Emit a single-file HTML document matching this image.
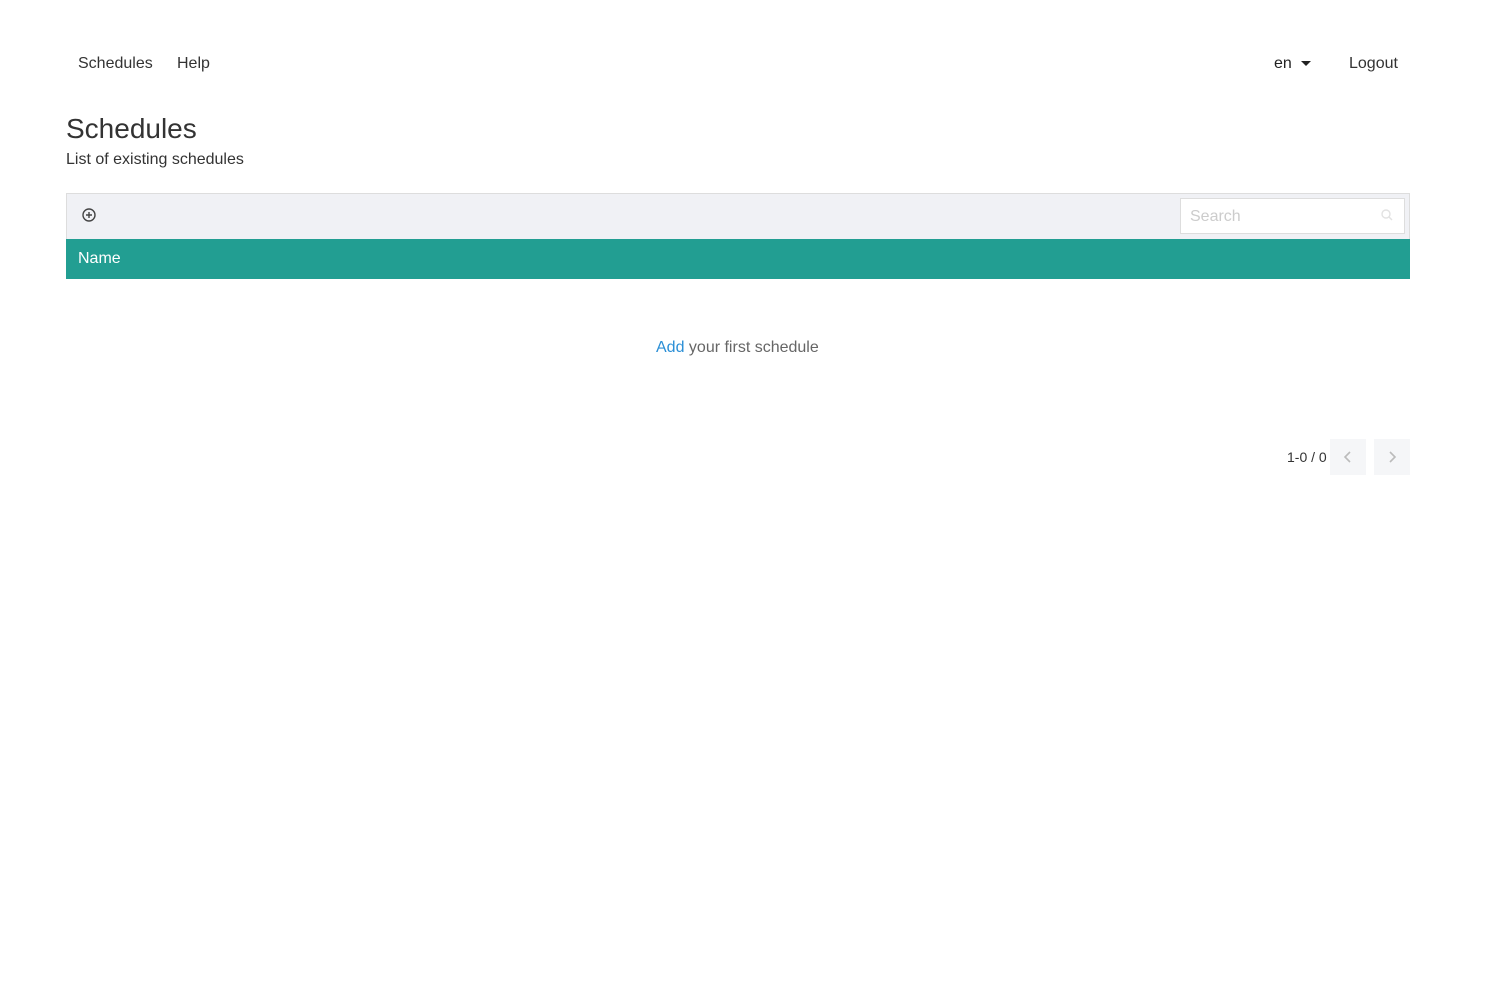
<!DOCTYPE html>
<html><head><meta charset="utf-8"><style>
body{margin:0;background:#fff;font-family:"Liberation Sans",sans-serif;color:#333;width:1506px;height:982px;position:relative;overflow:hidden}
.a{position:absolute;white-space:nowrap}
</style></head><body>
<div class="a" style="left:78px;top:55px;font-size:16px;color:#333">Schedules</div>
<div class="a" style="left:177px;top:55px;font-size:16px;color:#333">Help</div>
<div class="a" style="left:1274px;top:55px;font-size:16px;color:#222">en</div>
<div class="a" style="left:1301px;top:61px;width:0;height:0;border-left:5px solid transparent;border-right:5px solid transparent;border-top:5px solid #222"></div>
<div class="a" style="left:1349px;top:55px;font-size:16px;color:#333">Logout</div>
<div class="a" style="left:66px;top:113px;font-size:28px;color:#333">Schedules</div>
<div class="a" style="left:66px;top:151px;font-size:16px;color:#333">List of existing schedules</div>
<div class="a" style="left:66px;top:193px;width:1342px;height:45px;background:#f0f1f5;border:1px solid #ddd;border-bottom:none"></div>
<svg class="a" style="left:81px;top:207px" width="16" height="16" viewBox="0 0 16 16"><circle cx="8" cy="8" r="6" fill="none" stroke="#444" stroke-width="1.4"/><path d="M8 5v6M5 8h6" stroke="#444" stroke-width="1.4"/></svg>
<div class="a" style="left:1180px;top:198px;width:223px;height:34px;background:#fff;border:1px solid #ddd"></div>
<div class="a" style="left:1190px;top:208px;font-size:16px;color:#ccc">Search</div>
<svg class="a" style="left:1380px;top:208px" width="14" height="14" viewBox="0 0 14 14"><circle cx="6" cy="6" r="4" fill="none" stroke="#e2e2e2" stroke-width="1.4"/><path d="M9 9l3 3" stroke="#e2e2e2" stroke-width="1.4"/></svg>
<div class="a" style="left:66px;top:239px;width:1344px;height:40px;background:#229e92"></div>
<div class="a" style="left:78px;top:250px;font-size:16px;color:#fff">Name</div>
<div class="a" style="left:656px;top:339px;font-size:16px;color:#666"><span style="color:#2b8fd6">Add</span> your first schedule</div>
<div class="a" style="left:1287px;top:449px;font-size:14px;color:#333">1-0 / 0</div>
<div class="a" style="left:1330px;top:439px;width:36px;height:36px;background:#f5f6f8"></div>
<div class="a" style="left:1374px;top:439px;width:36px;height:36px;background:#f5f6f8"></div>
<svg class="a" style="left:1342px;top:450px" width="12" height="14"><path d="M8 2L3 7l5 5" fill="none" stroke="#bbb" stroke-width="1.6"/></svg>
<svg class="a" style="left:1386px;top:450px" width="12" height="14"><path d="M4 2l5 5-5 5" fill="none" stroke="#bbb" stroke-width="1.6"/></svg>
</body></html>
